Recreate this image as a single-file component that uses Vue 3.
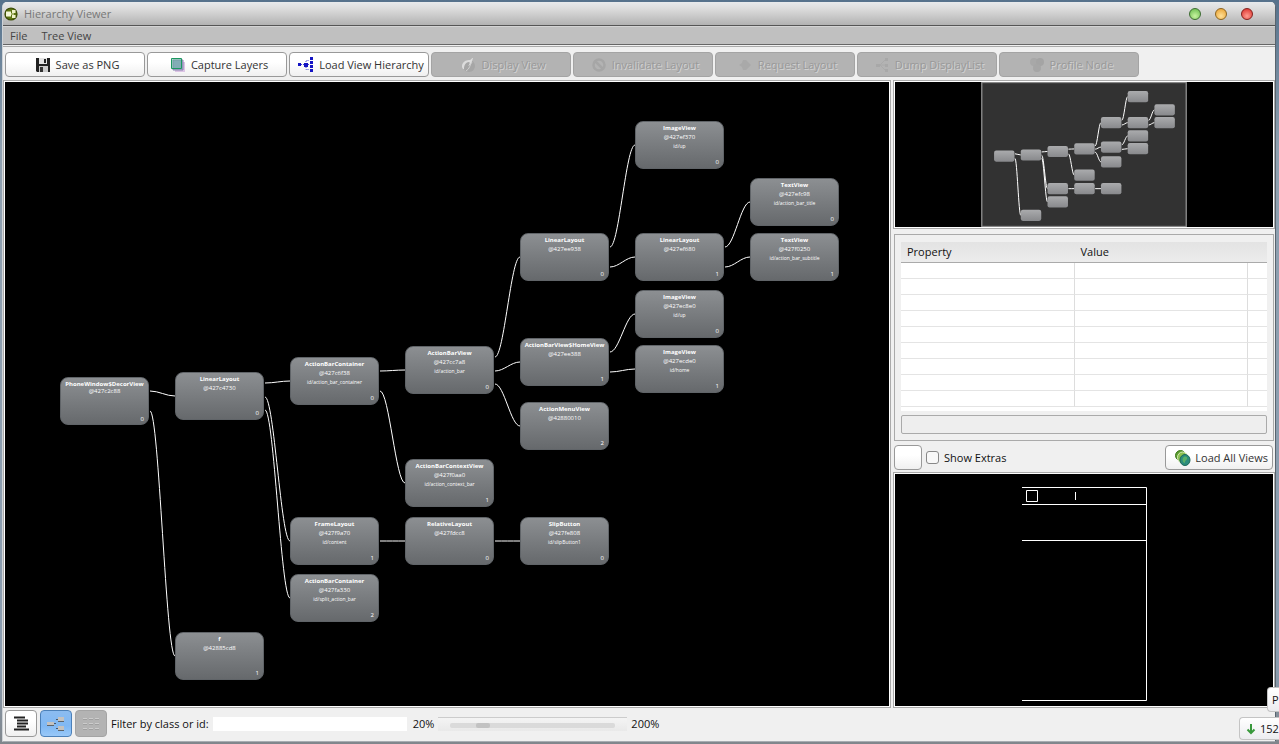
<script setup>
import { ref } from 'vue'

const NODE_W = 88
const NODE_H = 48

const nodes = [
  { id: 'decor', x: 55, y: 295, name: 'PhoneWindow$DecorView', addr: '@427c2c88', index: 0, tight: true },
  { id: 'root', x: 170, y: 290, name: 'LinearLayout', addr: '@427c4730', index: 0 },
  { id: 'f', x: 170, y: 550, name: 'f', addr: '@42885cd8', index: 1 },
  { id: 'bar', x: 285, y: 275, name: 'ActionBarContainer', addr: '@427c6f38', res: 'id/action_bar_container', index: 0 },
  { id: 'frame', x: 285, y: 435, name: 'FrameLayout', addr: '@427f9a70', res: 'id/content', index: 1 },
  { id: 'split', x: 285, y: 492, name: 'ActionBarContainer', addr: '@427fa330', res: 'id/split_action_bar', index: 2 },
  { id: 'barview', x: 400, y: 264, name: 'ActionBarView', addr: '@427cc7a8', res: 'id/action_bar', index: 0 },
  { id: 'context', x: 400, y: 377, name: 'ActionBarContextView', addr: '@427f0aa0', res: 'id/action_context_bar', index: 1 },
  { id: 'relative', x: 400, y: 435, name: 'RelativeLayout', addr: '@427fdcc8', index: 0 },
  { id: 'linear', x: 515, y: 151, name: 'LinearLayout', addr: '@427ee938', index: 0 },
  { id: 'homeview', x: 515, y: 256, name: 'ActionBarView$HomeView', addr: '@427ee388', index: 1 },
  { id: 'menu', x: 515, y: 320, name: 'ActionMenuView', addr: '@42880010', index: 2 },
  { id: 'slip', x: 515, y: 435, name: 'SlipButton', addr: '@427fe808', res: 'id/slipButton1', index: 0 },
  { id: 'up', x: 630, y: 39, name: 'ImageView', addr: '@427ef370', res: 'id/up', index: 0 },
  { id: 'titles', x: 630, y: 151, name: 'LinearLayout', addr: '@427ef680', index: 1 },
  { id: 'up2', x: 630, y: 208, name: 'ImageView', addr: '@427ec8e0', res: 'id/up', index: 0 },
  { id: 'home', x: 630, y: 263, name: 'ImageView', addr: '@427ecde0', res: 'id/home', index: 1 },
  { id: 'title', x: 745, y: 96, name: 'TextView', addr: '@427efc98', res: 'id/action_bar_title', index: 0 },
  { id: 'subtitle', x: 745, y: 151, name: 'TextView', addr: '@427f0250', res: 'id/action_bar_subtitle', index: 1 },
]

const children = {
  decor: ['root', 'f'],
  root: ['bar', 'frame', 'split'],
  bar: ['barview', 'context'],
  frame: ['relative'],
  relative: ['slip'],
  barview: ['linear', 'homeview', 'menu'],
  linear: ['up', 'titles'],
  homeview: ['up2', 'home'],
  titles: ['title', 'subtitle'],
}
const ports = { 1: [24], 2: [14, 34], 3: [11, 25, 38] }

const byId = Object.fromEntries(nodes.map((n) => [n.id, n]))
const edges = Object.entries(children).flatMap(([from, list]) =>
  list.map((to, i) => {
    const x1 = byId[from].x + NODE_W + 2
    const y1 = byId[from].y + ports[list.length][i]
    const x2 = byId[to].x
    const y2 = byId[to].y + NODE_H / 2
    return `M${x1} ${y1}C${x1 + 9} ${y1} ${x2 - 9} ${y2} ${x2} ${y2}`
  })
)

const filter = ref('')
const zoom = ref(51)
const showExtras = ref(false)
</script>

<template>
  <div class="desktop">
    <div class="window">
      <header class="titlebar">
        <svg class="app-icon" viewBox="0 0 14 14" aria-hidden="true">
          <circle cx="7" cy="7" r="6.6" fill="#3c4c08" />
          <circle cx="7" cy="7" r="5.4" fill="#5c7412" />
          <path d="M2 4.500h5v5H2z" fill="#f4f8d8" />
          <path d="M8 3h3.500v3H8zM8 8h3.500v3H8z" fill="#eef2c8" />
          <path d="M7 7h3" stroke="#eef2c8" />
        </svg>
        <h1>Hierarchy Viewer</h1>
        <div class="lights">
          <button class="light green" aria-label="Minimize"></button>
          <button class="light amber" aria-label="Maximize"></button>
          <button class="light red" aria-label="Close"></button>
        </div>
      </header>

      <nav class="menubar">
        <button>File</button>
        <button>Tree View</button>
      </nav>

      <div class="toolbar">
        <button class="btn tool">
          <svg viewBox="0 0 16 16" aria-hidden="true">
            <path d="M1 1h14v14H2l-1-1z" fill="#222" />
            <path d="M4 1h8v6H4z" fill="#e4e4e4" /><path d="M9 2h2v4H9z" fill="#222" />
            <path d="M4 9h9v6H4z" fill="#ccc" /><path d="M5 10h3v5H5z" fill="#333" />
          </svg>
          Save as PNG
        </button>
        <button class="btn tool">
          <svg viewBox="0 0 16 16" aria-hidden="true">
            <path d="M5 5h10v10H5z" fill="#dcc4e4" />
            <path d="M3 3h10v10H3z" fill="#a4a4cc" stroke="#8a86b0" />
            <path d="M1.500 1.500h10v10h-10z" fill="#58b898" fill-opacity=".45" stroke="#1c9860" />
          </svg>
          Capture Layers
        </button>
        <button class="btn tool">
          <svg viewBox="0 0 16 16" aria-hidden="true">
            <path d="M0 6h3v3H0zM6 6h4v4H6zM12 0h3v3h-3zM12 4h3v3h-3zM12 8h3v3h-3zM12 12h3v3h-3z" fill="#1414c4" />
            <path d="M3 7.500h3M8 5V3.500h3M10 7.500h2M8 10v2.500h3" fill="none" stroke="#4848d0" stroke-dasharray="1 1" />
          </svg>
          Load View Hierarchy
        </button>
        <button class="btn tool" disabled>
          <svg viewBox="0 0 16 16" aria-hidden="true">
            <circle cx="9" cy="9" r="6" fill="#a6a6a6" />
            <path d="M3 12c-3-4 1-9 6-9 3 0 2-2 4-2-1 4-2 7-5 8 2-2 2-4 1-4-3 0-5 3-5 7z" fill="#dcdcdc" />
            <path d="M6 14c4-2 4-7 6-9" stroke="#d0d0d0" fill="none" />
          </svg>
          Display View
        </button>
        <button class="btn tool" disabled>
          <svg viewBox="0 0 16 16" aria-hidden="true">
            <circle cx="8" cy="8" r="5.500" fill="none" stroke="#a6a6a6" stroke-width="2.500" />
            <path d="M4 4l8 8" stroke="#a6a6a6" stroke-width="2.500" />
          </svg>
          Invalidate Layout
        </button>
        <button class="btn tool" disabled>
          <svg viewBox="0 0 16 16" aria-hidden="true">
            <path d="M2 8l3-2 1-3 3 0 5 5-5 5H6l-1-3z" fill="#a9a9a9" />
          </svg>
          Request Layout
        </button>
        <button class="btn tool" disabled>
          <svg viewBox="0 0 16 16" aria-hidden="true">
            <path d="M2 7h4v3H2zM11 1h3v3h-3zM11 7h3v3h-3zM11 12h3v3h-3z" fill="#a8a8a8" />
            <path d="M6 8l5-5M6 8h5M6 8l5 5" stroke="#aaa" />
          </svg>
          Dump DisplayList
        </button>
        <button class="btn tool" disabled>
          <svg viewBox="0 0 16 16" aria-hidden="true">
            <circle cx="5" cy="5" r="4" fill="#a8a8a8" /><circle cx="11" cy="5" r="4" fill="#a4a4a4" /><circle cx="8" cy="11" r="4" fill="#a6a6a6" />
          </svg>
          Profile Node
        </button>
      </div>

      <main class="panes">
        <section class="frame tree" aria-label="View tree">
          <svg class="edges" aria-hidden="true">
            <path v-for="d in edges" :key="d" :d="d" />
          </svg>
          <article
            v-for="n in nodes"
            :key="n.id"
            class="node"
            :class="{ tight: n.tight }"
            :style="{ left: n.x + 'px', top: n.y + 'px' }"
          >
            <strong>{{ n.name }}</strong>
            <span class="addr">{{ n.addr }}</span>
            <span v-if="n.res" class="res">{{ n.res }}</span>
            <span class="index">{{ n.index }}</span>
          </article>
        </section>

        <aside class="side">
          <div class="frame overview">
            <svg viewBox="0 0 884 624" aria-label="Overview">
              <defs>
                <linearGradient id="mini" x1="0" y1="0" x2="0" y2="1">
                  <stop offset="0" stop-color="#aaabad" />
                  <stop offset="1" stop-color="#88898c" />
                </linearGradient>
              </defs>
              <rect class="viewport" x="2" y="2" width="880" height="620" />
              <path v-for="d in edges" :key="d" :d="d" class="mini-edge" />
              <rect v-for="n in nodes" :key="n.id" :x="n.x" :y="n.y" width="88" height="48" rx="9" fill="url(#mini)" />
            </svg>
          </div>

          <div class="properties">
            <div class="table-wrap">
              <table>
                <colgroup><col /><col /><col class="spare" /></colgroup>
                <thead>
                  <tr><th>Property</th><th>Value</th><th></th></tr>
                </thead>
                <tbody>
                  <tr v-for="r in 9" :key="r"><td></td><td></td><td></td></tr>
                </tbody>
              </table>
            </div>
            <input class="detail" type="text" readonly aria-label="Property value" />
          </div>

          <div class="extras">
            <button class="btn blank" aria-label="Background colour"></button>
            <label><input v-model="showExtras" type="checkbox" />Show Extras</label>
            <button class="btn load">
              <svg viewBox="0 0 16 16" aria-hidden="true">
                <ellipse cx="5.500" cy="5.500" rx="5" ry="5" fill="#5c9c30" stroke="#3e7a1c" />
                <ellipse cx="7.500" cy="7.500" rx="5" ry="5.500" fill="#8cc050" stroke="#d8ecb8" />
                <ellipse cx="10" cy="10" rx="5" ry="5.500" fill="#2c8c7c" stroke="#1c6858" />
                <path d="M8 8c2-3 5-1 4 1s-2 1-2 4c-2 0-3-3-2-5z" fill="#58b068" />
              </svg>
              Load All Views
            </button>
          </div>

          <div class="frame preview">
            <svg viewBox="0 0 125 214" aria-label="Layout preview">
              <path d="M0 .5h124.500v213H0M0 17.500h124M0 53.500h124M4.500 3.500h11v11h-11zM53.500 5v8" />
            </svg>
          </div>
        </aside>
      </main>

      <footer class="statusbar">
        <button class="btn mode" aria-label="Property view">
          <svg viewBox="0 0 18 16" aria-hidden="true">
            <path d="M2 1.500h11M5 4.500h11M5 7.500h11M5 10.500h9M2 13.500h15" stroke="#222" stroke-width="2" />
          </svg>
        </button>
        <button class="btn mode active" aria-label="Tree view">
          <svg viewBox="0 0 18 16" aria-hidden="true">
            <path d="M0 6h7v3H0zM11 1h6v4h-6zM11 10h6v4h-6z" fill="#c4c2c0" />
            <path d="M0 9.500h7M11 5.500h6M11 14.500h6" stroke="#5c646c" />
            <path d="M7 7.500h2M9 3.500h2M9 12.500h2" stroke="#48586c" />
          </svg>
        </button>
        <button class="btn mode" disabled aria-label="Pixel view">
          <svg viewBox="0 0 18 16" aria-hidden="true">
            <path d="M1 2.500h16M1 7.500h16M1 12.500h16" stroke="#ccc" stroke-dasharray="4 2" />
            <path d="M1 3.500h16M1 8.500h16M1 13.500h16" stroke="#a0a0a0" stroke-dasharray="4 2" />
          </svg>
        </button>
        <label for="filter">Filter by class or id:</label>
        <input id="filter" v-model="filter" class="filter" type="text" />
        <span>20%</span>
        <input v-model="zoom" class="zoom" type="range" min="20" max="200" aria-label="Zoom" />
        <span>200%</span>
      </footer>
    </div>

    <div class="popup small">P</div>
    <div class="popup speed">
      <svg viewBox="0 0 10 12" aria-hidden="true">
        <path d="M5 1v9M1.500 6.500L5 10l3.500-3.500" fill="none" stroke="#38983c" stroke-width="2" />
      </svg>
      152
    </div>
  </div>
</template>

<style>
body {
  margin: 0;
}
</style>

<style scoped>
* {
  box-sizing: border-box;
}
.desktop {
  position: relative;
  display: flex;
  min-height: 100vh;
  padding: 2px 3px 2px 2px;
  overflow: hidden;
  background: linear-gradient(#56728c, #8fa0b0 20%, #8a9caf 90%, #80868c);
  font: 11px/16px "Open Sans", "Noto Sans", sans-serif;
  color: #111;
}
.window {
  flex: 1;
  min-width: 0;
  display: flex;
  flex-direction: column;
  border: 1px solid #cfd3d7;
  border-top: 0;
  border-right-color: #59646e;
  border-bottom: 1px solid #a8adb2;
  border-radius: 5px 5px 0 0;
  background: #f0f0f0;
  overflow: hidden;
}
button,
input {
  font: inherit;
  color: inherit;
  margin: 0;
}
h1 {
  margin: 0;
  font-size: 11px;
  font-weight: 400;
  color: #777;
}
.titlebar {
  display: flex;
  align-items: center;
  height: 24px;
  padding: 0 22px 0 1px;
  gap: 6px;
  background: linear-gradient(#e8eaec, #dcdcdc 30%, #b2b2b2);
  border-bottom: 1px solid #555;
}
.app-icon {
  width: 14px;
  height: 14px;
}
.lights {
  display: flex;
  gap: 14px;
  margin-left: auto;
}
.light {
  width: 12px;
  height: 12px;
  padding: 0;
  border: 1px solid #555;
  border-radius: 50%;
}
.green {
  border-color: #3c6c30;
  background: radial-gradient(circle at 50% 70%, #c8f4a0, #62b848);
}
.amber {
  border-color: #8c6420;
  background: radial-gradient(circle at 50% 70%, #ffe098, #e89c28);
}
.red {
  border-color: #84201c;
  background: radial-gradient(circle at 50% 70%, #ff9c90, #d82824);
}
.menubar {
  display: flex;
  gap: 14px;
  height: 19px;
  padding: 1px 7px;
  background: #c0c0c0;
  border-top: 1px solid #d4d4d4;
  border-bottom: 1px solid #666;
}
.menubar button {
  padding: 0;
  border: 0;
  background: none;
  line-height: 16px;
  color: #444;
}
.toolbar {
  display: flex;
  gap: 2px;
  margin-top: 1px;
  padding: 5px 2px 3px;
  border-top: 1px solid #aaa;
}
.btn {
  display: flex;
  align-items: center;
  justify-content: center;
  border: 1px solid #999;
  border-radius: 4px;
  background: linear-gradient(#fff 40%, #f0f0f0);
  white-space: nowrap;
  color: #333;
}
.btn:disabled {
  background: #b3b3b3;
  border-color: #a4a4a4;
  color: #999;
  text-shadow: 1px 1px 0 #d4d4d4;
}
.tool {
  width: 140px;
  height: 25px;
  padding: 0 0 0 4px;
  gap: 5px;
}
.tool svg,
.load svg {
  width: 16px;
  height: 16px;
  flex: none;
}
.panes {
  flex: 1;
  min-height: 0;
  display: grid;
  grid-template-columns: minmax(0, 1fr) 381px;
  gap: 4px;
}
.frame {
  border: 1px solid #fff;
  outline: 1px solid #aaa;
  background: #000;
}
.tree {
  position: relative;
  overflow: hidden;
  margin: 1px 0 1px 1px;
}
.edges {
  display: block;
  position: absolute;
  inset: 0;
  width: 100%;
  height: 100%;
}
.edges path,
.mini-edge {
  fill: none;
  stroke: #fff;
}
.mini-edge {
  vector-effect: non-scaling-stroke;
}
.node {
  position: absolute;
  display: flex;
  flex-direction: column;
  align-items: center;
  width: 89px;
  height: 48px;
  padding-top: 2px;
  border: 1px solid #606468;
  border-radius: 8px;
  background: linear-gradient(#8c8f92, #66696c);
  color: #fff;
  font-size: 6px;
  line-height: 9px;
  white-space: nowrap;
}
.node.tight {
  line-height: 7px;
  padding-top: 3px;
}
.res {
  font-size: 5px;
}
.index {
  position: absolute;
  right: 4px;
  bottom: 1px;
}
.side {
  display: flex;
  flex-direction: column;
  min-height: 0;
  padding: 1px 1px 1px 0;
}
.overview {
  height: 147px;
}
.overview svg {
  display: block;
  width: 100%;
  height: 100%;
}
.viewport {
  fill: #323232;
  stroke: #888;
  stroke-width: 6px;
}
.properties {
  display: flex;
  flex-direction: column;
  gap: 4px;
  margin-top: 6px;
  padding: 7px 6px 6px;
  border: 1px solid #aaa;
}
.table-wrap {
  height: 169px;
  background: #fff;
  overflow: hidden;
}
table {
  width: 100%;
  table-layout: fixed;
  border-collapse: separate;
  border-spacing: 0;
}
.spare {
  width: 19px;
}
th {
  height: 21px;
  padding: 0 6px;
  text-align: left;
  font-weight: 400;
  background: linear-gradient(#e3e3e3, #ececec);
  border-bottom: 1px solid #aaa;
}
td {
  height: 16px;
  padding: 0;
  border-bottom: 1px solid #e4e4e4;
  border-right: 1px solid #ddd;
}
td:last-child {
  border-right: 0;
}
.detail {
  width: 100%;
  height: 19px;
  border: 1px solid #aaa;
  border-radius: 2px;
  background: #eee;
}
.extras {
  display: flex;
  align-items: center;
  gap: 4px;
  padding: 4px 1px 3px 0;
}
.blank {
  width: 28px;
  height: 25px;
}
.extras label {
  display: flex;
  align-items: center;
  gap: 5px;
}
.extras input {
  appearance: none;
  width: 13px;
  height: 13px;
  border: 1px solid #888;
  border-radius: 3px;
  background: #f8f8f8;
}
.load {
  height: 25px;
  margin-left: auto;
  padding: 0 4px 0 9px;
  gap: 4px;
}
.preview {
  flex: 1;
  display: flex;
  align-items: center;
  justify-content: center;
  padding-top: 8px;
}
.preview svg {
  width: 125px;
  height: 214px;
}
.preview path {
  fill: none;
  stroke: #fff;
}
.statusbar {
  display: flex;
  align-items: center;
  padding: 2px 2px 4px;
}
.mode {
  width: 32px;
  height: 27px;
  padding: 0;
  margin-right: 3px;
}
.mode svg {
  width: 18px;
  height: 16px;
}
.mode.active {
  border-color: #4c80b8;
  background: linear-gradient(#8cbcf0, #80b8f4 60%, #98c8f8);
}
.statusbar label {
  margin: 0 4px 0 1px;
}
.filter {
  width: 194px;
  height: 14px;
  margin-right: 6px;
  padding: 0 2px;
  border: 0;
  background: #fff;
}
.zoom {
  appearance: none;
  width: 189px;
  height: 14px;
  margin: 0 4px;
  padding: 3px 12px 0;
  border-top: 1px solid #ccc;
  background: linear-gradient(#f4f4f4, #e9e9e9);
}
.zoom::-webkit-slider-runnable-track {
  height: 5px;
  border-radius: 2px;
  background: #dadada;
}
.zoom::-webkit-slider-thumb {
  appearance: none;
  width: 14px;
  height: 5px;
  border-radius: 2px;
  background: #c2c2c2;
}
.popup {
  position: absolute;
  right: 0;
  display: flex;
  align-items: center;
  white-space: nowrap;
  overflow: hidden;
  border: 1px solid #c4c4c4;
  border-right: 0;
  border-radius: 4px 0 0 4px;
  background: linear-gradient(#fff, #ececf0);
}
.small {
  bottom: 32px;
  width: 12px;
  height: 25px;
  padding-left: 4px;
}
.speed {
  bottom: 4px;
  width: 40px;
  height: 23px;
  gap: 4px;
  padding-left: 6px;
}
.speed svg {
  flex: none;
  width: 10px;
  height: 12px;
}
</style>
